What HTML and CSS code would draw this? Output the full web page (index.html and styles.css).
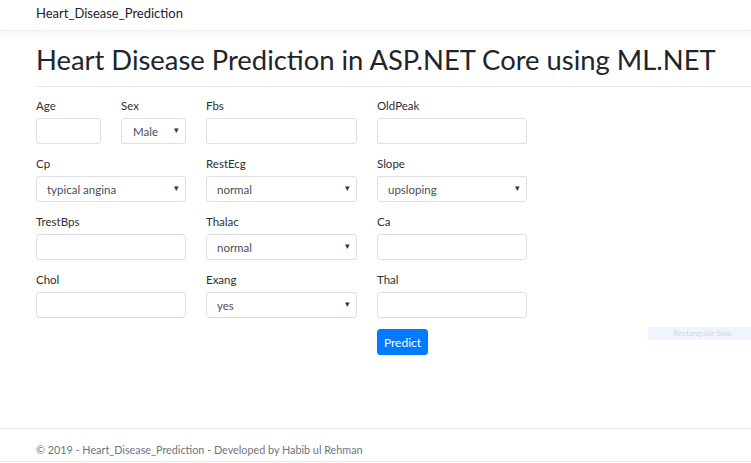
FILE: index.html
```html
<!DOCTYPE html>
<html>
<head lang="en">
    <meta charset="UTF-8">
    <title>Heart_Disease_Prediction</title>
    <link rel="stylesheet" href="styles.css">
</head>
<body>
<header class="navbar">
    <a class="navbar-brand" href="#">Heart_Disease_Prediction</a>
</header>
<div class="main">
    <h1 class="page-title">Heart Disease Prediction in ASP.NET Core using ML.NET</h1>
    <hr class="title-rule">
    <form class="predict-form">
        <div class="field span-1">
            <label>Age</label>
            <input class="form-control" type="text">
        </div>
        <div class="field span-1">
            <label>Sex</label>
            <div class="select-wrap">
                <select class="form-control select-center">
                    <option>Male</option>
                    <option>Female</option>
                </select>
            </div>
        </div>
        <div class="field span-2">
            <label>Fbs</label>
            <input class="form-control" type="text">
        </div>
        <div class="field span-2">
            <label>OldPeak</label>
            <input class="form-control" type="text">
        </div>

        <div class="field span-2">
            <label>Cp</label>
            <div class="select-wrap">
                <select class="form-control">
                    <option>typical angina</option>
                </select>
            </div>
        </div>
        <div class="field span-2">
            <label>RestEcg</label>
            <div class="select-wrap">
                <select class="form-control">
                    <option>normal</option>
                </select>
            </div>
        </div>
        <div class="field span-2">
            <label>Slope</label>
            <div class="select-wrap">
                <select class="form-control">
                    <option>upsloping</option>
                </select>
            </div>
        </div>

        <div class="field span-2">
            <label>TrestBps</label>
            <input class="form-control" type="text">
        </div>
        <div class="field span-2">
            <label>Thalac</label>
            <div class="select-wrap">
                <select class="form-control">
                    <option>normal</option>
                </select>
            </div>
        </div>
        <div class="field span-2">
            <label>Ca</label>
            <input class="form-control" type="text">
        </div>

        <div class="field span-2">
            <label>Chol</label>
            <input class="form-control" type="text">
        </div>
        <div class="field span-2">
            <label>Exang</label>
            <div class="select-wrap">
                <select class="form-control">
                    <option>yes</option>
                </select>
            </div>
        </div>
        <div class="field span-2">
            <label>Thal</label>
            <input class="form-control" type="text">
        </div>

        <div class="actions">
            <button class="btn-primary" type="button">Predict</button>
        </div>
    </form>
</div>
<div class="snip-tip">Rectangular Snip</div>
<footer class="footer">
    &copy; 2019 - Heart_Disease_Prediction - Developed by Habib ul Rehman
</footer>
</body>
</html>
```

FILE: styles.css
```css
html, body{
    margin: 0;
    padding: 0;
    background: #fff;
}
body{
    font-family: Lato, "Open Sans", sans-serif;
    color: #212529;
    font-size: 11px;
    width: 751px;
    height: 463px;
    position: relative;
    overflow: hidden;
}
.navbar{
    height: 31px;
    box-sizing: border-box;
    padding: 4px 36px 0;
    border-bottom: 1px solid #eceef0;
    box-shadow: 0 3px 8px rgba(0, 0, 0, .05);
}
.navbar-brand{
    font-size: 13px;
    line-height: 18px;
    color: #212529;
    text-decoration: none;
}
.main{
    padding: 0 0 0 36px;
}
.page-title{
    margin: 0;
    padding-top: 12px;
    font-size: 27.4px;
    line-height: 34px;
    font-weight: 400;
    white-space: nowrap;
}
.title-rule{
    border: 0;
    border-top: 1px solid #e9ecef;
    margin: 9px 0 0;
}
.predict-form{
    display: grid;
    grid-template-columns: 65px 65px 65px 66px 65px 65px;
    column-gap: 20px;
    row-gap: 11px;
    padding-top: 10px;
}
.span-1{
    grid-column: span 1;
}
.span-2{
    grid-column: span 2;
}
.field label{
    display: block;
    line-height: 17px;
    margin-bottom: 4px;
    font-size: 11.5px;
    color: #2b2f33;
}
.form-control{
    display: block;
    width: 100%;
    height: 26px;
    box-sizing: border-box;
    border: 1px solid #dcdfe3;
    border-radius: 3px;
    background: #fff;
    font-family: inherit;
    font-size: 11.5px;
    color: #495057;
    padding: 0 10px;
    outline: none;
}
.select-wrap{
    position: relative;
}
.select-wrap select{
    appearance: none;
    -webkit-appearance: none;
}
.select-wrap::after{
    content: "▾";
    position: absolute;
    right: 7px;
    top: 6px;
    font-size: 9px;
    color: #333;
    pointer-events: none;
}
.select-center{
    padding-left: 11px;
}
.actions{
    grid-column: 5 / span 2;
}
.btn-primary{
    height: 26px;
    width: 51px;
    padding: 0;
    background: #007bff;
    border: 1px solid #007bff;
    border-radius: 3px;
    color: #fff;
    font-family: inherit;
    font-size: 12px;
}
.snip-tip{
    position: absolute;
    left: 648px;
    top: 327px;
    width: 103px;
    height: 13px;
    background: #eef5fc;
    color: #d4d8dc;
    font-size: 8px;
    line-height: 13px;
    padding-left: 6px;
    box-sizing: border-box;
    text-align: center;
}
.footer{
    position: absolute;
    left: 0;
    right: 0;
    top: 428px;
    height: 34px;
    box-sizing: border-box;
    border-top: 1px solid #e7e9eb;
    border-bottom: 1px solid #e7e9eb;
    padding: 12px 36px 0;
    color: #6c757d;
    font-size: 10.8px;
    line-height: 17px;
}
```
